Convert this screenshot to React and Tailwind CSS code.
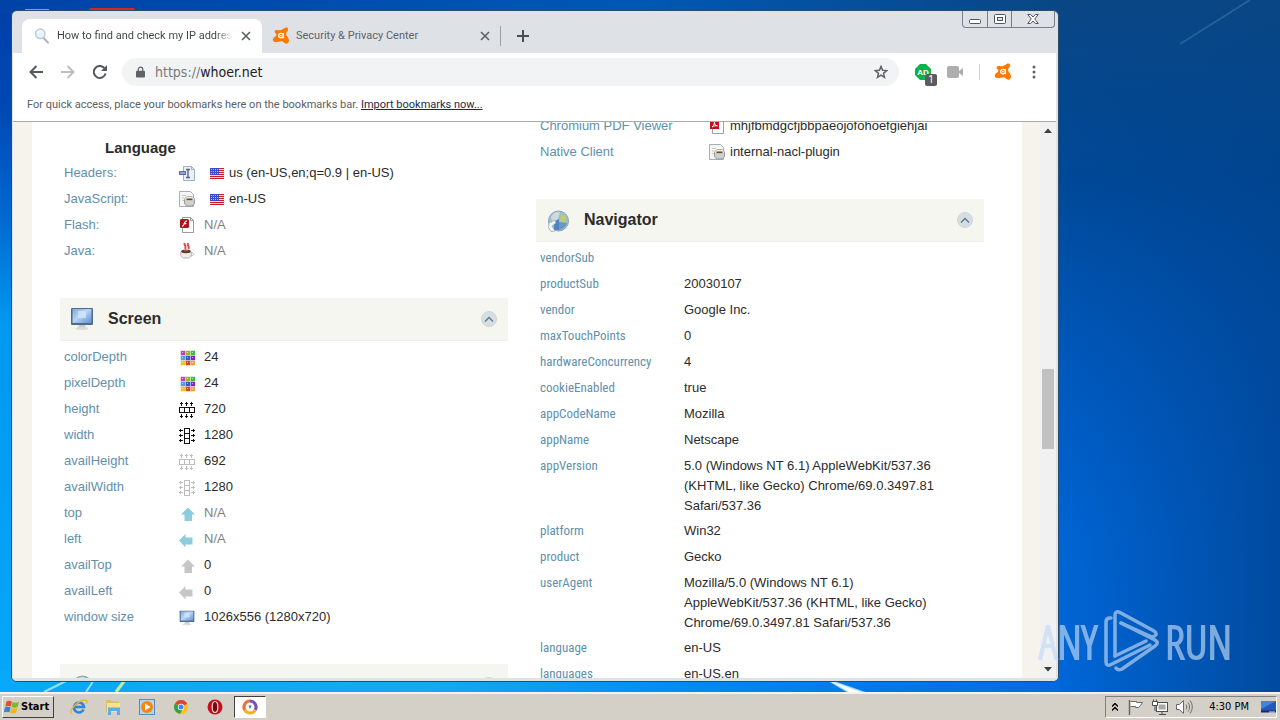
import React from "react";

const pageFont = "font-['Liberation_Sans',Arial,sans-serif]";
const uiFont = "font-['Tahoma','Roboto','Noto_Sans',sans-serif]";
const boldUiFont = "font-['Tahoma','DejaVu_Sans_Condensed','Noto_Sans',sans-serif]";
const narrowFont = "font-['Roboto_Condensed','Liberation_Sans',sans-serif]";

/* ---------- icons ---------- */

function AvastIcon({ size = 18 }) {
  return (
    <svg width={size} height={size} viewBox="0 0 18 18" aria-hidden="true">
      <path
        d="M2.600 4.400C2.800 3 4.600 2.600 6.400 3.200C8.200 3.600 9.600 3 11 2C12.600 .8 14.200 0 15.400 .8C16.800 1.800 16.200 3.600 15 4.800C14 5.800 13.800 6.800 14.400 8.200C15.200 9.800 17 11.200 17 13.400C17 15.600 15.400 17.200 13.600 16.600C12 16 11.400 14.400 9.400 14.200C7.200 14.200 4.800 15.600 2.600 15C.6 14.400 .2 12.200 1.600 10.800C3 9.600 4.400 9.200 4.400 7.600C4.400 6.200 2.400 6 2.600 4.400Z"
        fill="#ff7800"
      />
      <circle cx="9" cy="8.600" r="2.300" fill="none" stroke="#fff" strokeWidth="1.300" />
      <path d="M11.400 6v5.200M8 8.600h1.600" stroke="#fff" strokeWidth="1.300" />
    </svg>
  );
}

function CloseIcon() {
  return (
    <svg width="10" height="10" viewBox="0 0 10 10" aria-hidden="true">
      <path d="M1 1l8 8M9 1l-8 8" stroke="#5f6368" strokeWidth="1.700" />
    </svg>
  );
}

function SearchFavicon() {
  return (
    <svg width="16" height="16" viewBox="0 0 16 16" aria-hidden="true">
      <path d="M9.600 10l4.400 4.600" stroke="#b4b0b8" strokeWidth="2" strokeLinecap="round" />
      <circle cx="6.300" cy="5.800" r="4.700" fill="#e9f3fb" stroke="#bccbe0" strokeWidth="1.500" />
      <path d="M4 5a2.600 2.600 0 0 1 2.600-2" stroke="#fff" strokeWidth="1.200" fill="none" />
    </svg>
  );
}

function FlagIcon() {
  return (
    <svg width="14" height="11" viewBox="0 0 14 11" shapeRendering="crispEdges" aria-hidden="true">
      <rect width="14" height="11" fill="#f6d5d8" />
      {[0, 2, 4, 6, 8, 10].map((y) => (
        <rect key={y} y={y} width="14" height="1" fill="#c81e2c" />
      ))}
      <rect width="9" height="7" fill="#4346c4" />
      {[1, 3, 5].map((y) => (
        <path key={y} d={`M1 ${y + 0.5}h8`} stroke="#b9bbee" strokeDasharray="1 1" />
      ))}
    </svg>
  );
}

function Sheet({ children }) {
  return (
    <svg width="16" height="16" viewBox="0 0 16 16" aria-hidden="true">
      {children}
    </svg>
  );
}

function HeaderIcon() {
  return (
    <Sheet>
      <path d="M4.500 1.500h8l3 3v11h-11z" fill="#e9eff4" stroke="#a3b0bc" />
      <path d="M12.500 1.500v3h3" fill="none" stroke="#a3b0bc" />
      <rect x="0" y="6" width="7" height="4" fill="#5b6cae" />
      <path d="M1 8h5" stroke="#cdd8f4" />
      <path d="M7 4.500h4M9 4.500v8M7 12.500h4" stroke="#54648c" strokeWidth="1.400" />
    </Sheet>
  );
}

function ScriptIcon() {
  return (
    <Sheet>
      <path d="M.5.500h11l3 3v12H.5z" fill="#f4f5f4" stroke="#a9afac" />
      <path d="M3 4.500h4M3 7h2M3 9.500h2" stroke="#c3cbc8" />
      <path d="M5.500 8.500a5 3 0 0 1 10 0v3.600a5 3 0 0 1-10 0z" fill="#ccd1cf" stroke="#979d9b" />
      <ellipse cx="10.500" cy="7.800" rx="4.300" ry="2" fill="#efebe0" />
      <path d="M7.500 8.400h6" stroke="#6b4a34" strokeWidth="1.600" />
    </Sheet>
  );
}

function FlashIcon() {
  return (
    <Sheet>
      <path d="M3.500.500h8l3 3v12h-11z" fill="#fff" stroke="#9a9a9a" />
      <path d="M11.500.500v3h3" fill="none" stroke="#9a9a9a" />
      <rect x="1" y="2" width="9" height="9" rx="1.500" fill="#b5101c" />
      <path d="M8 3.800c-2 0-2.200 1.400-2.800 2.900S4.300 9.300 3 9.300M4.600 6.700h2.700" stroke="#fff" strokeWidth="1.200" fill="none" />
    </Sheet>
  );
}

function PdfIcon() {
  return (
    <Sheet>
      <path d="M3.500.500h8l3 3v12h-11z" fill="#fff" stroke="#a0a0a0" />
      <path d="M11.500.500v3h3" fill="none" stroke="#a0a0a0" />
      <rect x="1" y="2" width="9" height="9" fill="#c1121c" />
      <path d="M3 9c2-1.600 2.800-4 2.400-5.400C5.200 6 6.400 7.600 8.400 7.800 6.400 7.500 4.600 7.900 3 9z" stroke="#fff" fill="none" />
    </Sheet>
  );
}

function JavaIcon() {
  return (
    <Sheet>
      <path d="M6 0c-2 2 2 2.600 0 6M9.500 0c-2.500 2.200 1.500 3 0 6" stroke="#e0454c" strokeWidth="1.900" fill="none" />
      <path d="M1.500 9h11c0 3.500-1 6-3.500 6H5C2.500 15 1.500 12.500 1.500 9z" fill="#ececea" stroke="#b4b4b0" />
      <path d="M12.500 10c3-.5 3 2.800-.6 3" fill="none" stroke="#b4b4b0" />
      <ellipse cx="7" cy="8.300" rx="4.800" ry="1.900" fill="#5a3a2a" />
      <path d="M5 7.800h4" stroke="#d8584e" />
    </Sheet>
  );
}

const palette = ["#c73fc0", "#9ab81c", "#35c13f", "#4b9fe8", "#3656dc", "#8a1ed0", "#f4c21c", "#d04a1e", "#f4a03c"];

function PaletteIcon() {
  return (
    <Sheet>
      {palette.map((fill, i) => (
        <g key={fill}>
          <rect x={2 + (i % 3) * 5} y={1 + Math.floor(i / 3) * 5} width="4" height="4" fill={fill} />
          <rect x={2 + (i % 3) * 5} y={1 + Math.floor(i / 3) * 5} width="4" height="4" fill="none" stroke={fill} strokeOpacity=".5" />
          <rect x={3 + (i % 3) * 5} y={2 + Math.floor(i / 3) * 5} width="1" height="1" fill="#fff" fillOpacity=".6" />
        </g>
      ))}
    </Sheet>
  );
}

function RulerIcon({ color, vertical }) {
  return (
    <svg width="16" height="16" viewBox="0 0 16 16" shapeRendering="crispEdges" aria-hidden="true">
      <g transform={vertical ? "rotate(90 8 8)" : undefined} fill="none" stroke={color}>
        <path d="M0 5.500h16M0 10.500h16M.5 5v6M5.500 5v6M10.500 5v6M15.500 5v6" />
        {[3, 8, 13].map((x) => (
          <path key={x} d={`M${x - 0.5} 0v4M${x - 2} 1.500h3M${x - 0.5} 12v4M${x - 2} 14.500h3`} />
        ))}
      </g>
    </svg>
  );
}

function ArrowIcon({ fill, left }) {
  return (
    <Sheet>
      <path
        d={left ? "M0 8.500L6.500 2v3.500h7v7h-7v3z" : "M9 1.500l7 7h-3v6.500H5.500V8.500H2z"}
        fill={fill}
      />
    </Sheet>
  );
}

function MonitorIcon({ size = 16 }) {
  return (
    <svg width={size} height={size} viewBox="0 0 24 24" aria-hidden="true">
      <defs>
        <linearGradient id="monitorGlass" x1="0" y1="0" x2="1" y2="1">
          <stop offset="0" stopColor="#7fabdf" />
          <stop offset=".45" stopColor="#b8d5f3" />
          <stop offset="1" stopColor="#5b93d4" />
        </linearGradient>
      </defs>
      <path d="M9 18h6l1 3H8z" fill="#c4c9ce" />
      <ellipse cx="12" cy="21.500" rx="6.500" ry="1.600" fill="#dadddf" />
      <rect x="1" y="1" width="22" height="17" rx="1" fill="#53688a" />
      <rect x="2.500" y="2" width="19" height="14" fill="url(#monitorGlass)" />
      <rect x="8" y="4" width="8" height="7" fill="#e3effa" fillOpacity=".6" />
    </svg>
  );
}

function GlobeIcon() {
  return (
    <svg width="24" height="24" viewBox="0 0 24 24" aria-hidden="true">
      <circle cx="12.500" cy="13" r="10" fill="#a3bccd" stroke="#90a3b2" />
      <path d="M5 9a9 9 0 0 1 9-5l-2 7-6 3z" fill="#cfdcdc" />
      <path d="M15 6c3 .5 5 2.500 5.500 6L18 16l-4-4z" fill="#bccf70" />
      <path d="M13 14l8 1c-1 4-5 7-8 7z" fill="#6a98c6" />
      <path d="M8 22V14l5-3v11z" fill="#4e85c0" />
      <path d="M3 15l6-3 1 3-4 3 3 5-4 .5-2.500-4z" fill="#f4f6f6" stroke="#9aa7ae" strokeWidth=".8" />
    </svg>
  );
}

function WindowsLogo() {
  return (
    <svg width="16" height="16" viewBox="0 0 16 16" aria-hidden="true">
      <path d="M2.500 2.600C4.500 1.400 6.300 1.700 8 2.600L6.800 7.600C5.200 6.800 3.300 6.600 1.200 7.700z" fill="#e5502a" />
      <path d="M8.700 3c2 1 4 1 6.300-.2l-1.300 5C11.500 9 9.300 8.800 7.500 7.900z" fill="#7db928" />
      <path d="M1 8.500c2-1.100 4-.8 5.600 0L5.400 13.300C3.700 12.500 2 12.400-.1 13.400z" fill="#2f86d6" />
      <path d="M7.300 8.900c2 .9 4 1 6.200-.2l-1.300 4.900c-2.200 1.200-4.300 1-6.100.2z" fill="#f7b51c" />
    </svg>
  );
}

function AnyRunMark() {
  return (
    <svg width="56" height="62" viewBox="0 0 56 62" fill="none" stroke="currentColor" strokeWidth="3.500" strokeLinejoin="round" strokeLinecap="round" aria-hidden="true">
      <path d="M8 8H7C4.500 8 3 9.500 3 12v40c0 3 2 4 5 2.500L47 35" />
      <path d="M12 46V5c0-3 2-4 5-2.500L51 21c2.500 1.500 3 4 .5 5L49 27 18 13" />
      <path d="M18 13l34 17c3 2 3 4 0 6L19 59c-3 1.500-5 .5-6-1M12 46l31-15" />
    </svg>
  );
}

/* ---------- data ---------- */

const grey = "#bdbdbd";

const languageRows = [
  { label: "Headers:", icon: <HeaderIcon />, flag: true, value: "us (en-US,en;q=0.9 | en-US)" },
  { label: "JavaScript:", icon: <ScriptIcon />, flag: true, value: "en-US" },
  { label: "Flash:", icon: <FlashIcon />, value: "N/A" },
  { label: "Java:", icon: <JavaIcon />, value: "N/A" },
];

const screenRows = [
  { label: "colorDepth", icon: <PaletteIcon />, value: "24" },
  { label: "pixelDepth", icon: <PaletteIcon />, value: "24" },
  { label: "height", icon: <RulerIcon color="#111" />, value: "720" },
  { label: "width", icon: <RulerIcon color="#111" vertical />, value: "1280" },
  { label: "availHeight", icon: <RulerIcon color={grey} />, value: "692" },
  { label: "availWidth", icon: <RulerIcon color={grey} vertical />, value: "1280" },
  { label: "top", icon: <ArrowIcon fill="#8ecbdb" />, value: "N/A" },
  { label: "left", icon: <ArrowIcon fill="#8ecbdb" left />, value: "N/A" },
  { label: "availTop", icon: <ArrowIcon fill="#c6c6c6" />, value: "0" },
  { label: "availLeft", icon: <ArrowIcon fill="#c6c6c6" left />, value: "0" },
  { label: "window size", icon: <MonitorIcon />, value: "1026x556 (1280x720)" },
];

const pluginRows = [
  { label: "Chromium PDF Viewer", icon: <PdfIcon />, value: "mhjfbmdgcfjbbpaeojofohoefgiehjai" },
  { label: "Native Client", icon: <ScriptIcon />, value: "internal-nacl-plugin" },
];

const navigatorRows = [
  ["vendorSub", ""],
  ["productSub", "20030107"],
  ["vendor", "Google Inc."],
  ["maxTouchPoints", "0"],
  ["hardwareConcurrency", "4"],
  ["cookieEnabled", "true"],
  ["appCodeName", "Mozilla"],
  ["appName", "Netscape"],
  ["appVersion", "5.0 (Windows NT 6.1) AppleWebKit/537.36 (KHTML, like Gecko) Chrome/69.0.3497.81 Safari/537.36"],
  ["platform", "Win32"],
  ["product", "Gecko"],
  ["userAgent", "Mozilla/5.0 (Windows NT 6.1) AppleWebKit/537.36 (KHTML, like Gecko) Chrome/69.0.3497.81 Safari/537.36"],
  ["language", "en-US"],
  ["languages", "en-US,en"],
];

/* ---------- page parts ---------- */

function IconTable({ rows, labelWidth, iconWidth, iconCell = "pt-[5px] pl-[3px]" }) {
  return (
    <table className="w-full table-fixed text-left text-[13px] leading-5">
      <colgroup>
        <col className={labelWidth} />
        <col className={iconWidth} />
        <col />
      </colgroup>
      <tbody>
        {rows.map((row) => (
          <tr key={row.label} className="h-[26px] align-top">
            <th scope="row" className="pt-[3px] pb-[2px] pl-1 font-normal text-[#6290ab]">{row.label}</th>
            <td className={iconCell}>{row.icon}</td>
            <td className={row.value === "N/A" ? "pt-[3px] text-[#808080]" : "pt-[3px] text-[#2b2b2b]"}>
              <span className={row.flag ? "flex items-center gap-[5px] pl-[6px]" : ""}>
                {row.flag && <FlagIcon />}
                {row.value}
              </span>
            </td>
          </tr>
        ))}
      </tbody>
    </table>
  );
}

function SectionHeader({ icon, title }) {
  return (
    <header className="flex h-[43px] items-center border-b border-[#efeee6] bg-[#f6f6f0] pr-[11px] pl-[10px]">
      {icon}
      <h2 className="flex-1 pl-[14px] text-base font-bold text-[#2b2b2b]">{title}</h2>
      <button type="button" aria-label="Collapse section" className="flex size-4 items-center justify-center rounded-full border border-[#cdd7dc] bg-[#d5dfe3]">
        <svg width="10" height="7" viewBox="0 0 10 7" aria-hidden="true">
          <path d="M1 5.500l4-4 4 4" fill="none" stroke="#5c7684" strokeWidth="1.300" />
        </svg>
      </button>
    </header>
  );
}

function WhoerPage() {
  return (
    <main className={`flex min-w-0 flex-1 justify-center overflow-hidden bg-[#f6f3ec] pr-[18px] pl-[19px] ${pageFont}`}>
      <div className="grid flex-1 grid-cols-2 items-start gap-7 bg-white pr-[38px] pl-7">
        <div className="flex flex-col gap-[34px]">
          <section>
            <h3 className="pt-[14px] pl-[45px] text-[15px] leading-6 font-bold text-[#2b2b2b]">Language</h3>
            <IconTable rows={languageRows} labelWidth="w-[116px]" iconWidth="w-7" />
          </section>
          <section>
            <SectionHeader icon={<MonitorIcon size={24} />} title="Screen" />
            <div className="pt-[3px]">
              <IconTable rows={screenRows} labelWidth="w-[116px]" iconWidth="w-7" iconCell="pt-[6px] pl-[3px]" />
            </div>
          </section>
          <section>
            <SectionHeader icon={<GlobeIcon />} />
          </section>
        </div>
        <div className="-mt-[9px] flex flex-col gap-[34px]">
          <section>
            <IconTable rows={pluginRows} labelWidth="w-[170px]" iconWidth="w-6" />
          </section>
          <section>
            <SectionHeader icon={<GlobeIcon />} title="Navigator" />
            <div className="pt-[3px]">
              <table className="w-full table-fixed text-left text-[13px] leading-5">
                <colgroup>
                  <col className="w-[148px]" />
                  <col />
                </colgroup>
                <tbody>
                  {navigatorRows.map(([label, value]) => (
                    <tr key={label} className="h-[26px] align-top">
                      <th scope="row" className={`pt-[3px] pb-[2px] pl-1 font-normal text-[#6290ab] ${narrowFont}`}>{label}</th>
                      <td className="pt-[3px] pr-8 pb-[2px] text-[#2b2b2b]">{value}</td>
                    </tr>
                  ))}
                </tbody>
              </table>
            </div>
          </section>
        </div>
      </div>
    </main>
  );
}

function ScrollBar() {
  return (
    <div className="flex w-4 flex-col items-center justify-between bg-[#f1f1f1] pt-1.5 pb-1.5">
      <svg width="8" height="5" viewBox="0 0 8 5" aria-hidden="true"><path d="M0 5l4-4.500L8 5z" fill="#404040" /></svg>
      <div className="flex w-full flex-1 flex-col px-[2px]">
        <div className="flex-[236]" />
        <div className="h-20 bg-[#c1c1c1]" />
        <div className="flex-[218]" />
      </div>
      <svg width="8" height="5" viewBox="0 0 8 5" aria-hidden="true"><path d="M0 0l4 4.500L8 0z" fill="#404040" /></svg>
    </div>
  );
}

/* ---------- browser chrome ---------- */

function TabStrip() {
  return (
    <div className="flex h-[42px] items-end pl-[10px]">
      <div className="flex h-[34px] w-60 items-center rounded-t-lg bg-white pr-[11px] pl-3">
        <SearchFavicon />
        <span className="ml-[7px] flex-1 overflow-hidden bg-linear-to-r from-[#3c4043] from-90% to-transparent bg-clip-text whitespace-nowrap text-transparent">
          How to find and check my IP address
        </span>
        <button type="button" aria-label="Close tab" className="ml-2"><CloseIcon /></button>
      </div>
      <div className="flex h-[34px] w-[238px] items-center pr-[10px] pl-[10px]">
        <AvastIcon />
        <span className="ml-[6px] flex-1 text-[#5f6368]">Security &amp; Privacy Center</span>
        <button type="button" aria-label="Close tab"><CloseIcon /></button>
      </div>
      <div className="flex h-[34px] items-center">
        <span className="h-5 w-px bg-[#9a9ea5]" />
        <button type="button" aria-label="New tab" className="ml-4">
          <svg width="12" height="12" viewBox="0 0 12 12" aria-hidden="true"><path d="M6 0v12M0 6h12" stroke="#4a4d52" strokeWidth="2" /></svg>
        </button>
      </div>
      <div className="mr-[3px] ml-auto flex h-[17px] self-start rounded-b-sm border border-t-0 border-[#77808c] text-[#4f5660]">
        <button type="button" aria-label="Minimize" className="flex w-6 items-center justify-center pt-1">
          <svg width="12" height="5" viewBox="0 0 12 5" aria-hidden="true"><rect x=".5" y=".5" width="11" height="4" rx="1" fill="#fff" stroke="currentColor" /></svg>
        </button>
        <button type="button" aria-label="Maximize" className="flex w-[25px] items-center justify-center border-x border-[#77808c]">
          <svg width="12" height="10" viewBox="0 0 12 10" aria-hidden="true">
            <rect x=".5" y=".5" width="11" height="9" rx="1" fill="#fff" stroke="currentColor" />
            <rect x="3.500" y="3.500" width="5" height="3" fill="#dee1e6" stroke="currentColor" />
          </svg>
        </button>
        <button type="button" aria-label="Close" className="flex w-[42px] items-center justify-center">
          <svg width="12" height="10" viewBox="0 0 12 10" aria-hidden="true">
            <path d="M.7.500h3L6 3 8.300.500h3L7.700 5l3.600 4.500h-3L6 7 3.700 9.500h-3L4.300 5z" fill="#fff" stroke="currentColor" />
          </svg>
        </button>
      </div>
    </div>
  );
}

function Toolbar() {
  return (
    <div className="flex h-[37px] items-center bg-white pr-[10px] pl-4">
      <div className="flex items-center gap-[18px]">
        <button type="button" aria-label="Back">
          <svg width="14" height="14" viewBox="0 0 14 14" aria-hidden="true"><path d="M14 7H2M7.500 1L1.500 7l6 6" fill="none" stroke="#55585d" strokeWidth="2" /></svg>
        </button>
        <button type="button" aria-label="Forward" disabled>
          <svg width="14" height="14" viewBox="0 0 14 14" aria-hidden="true"><path d="M0 7h12M6.500 1l6 6-6 6" fill="none" stroke="#bcbec1" strokeWidth="2" /></svg>
        </button>
        <button type="button" aria-label="Reload">
          <svg width="14" height="14" viewBox="0 0 14 14" aria-hidden="true">
            <path d="M12.600 8.500A6 6 0 1 1 11.300 3" fill="none" stroke="#55585d" strokeWidth="2" />
            <path d="M14 0v6H8z" fill="#55585d" />
          </svg>
        </button>
      </div>
      <div className="ml-[15px] flex h-7 flex-1 items-center rounded-full bg-[#f1f3f4] pr-[11px] pl-[14px]">
        <svg width="9" height="12" viewBox="0 0 10 12" aria-hidden="true">
          <rect x="0" y="4.500" width="10" height="7.500" rx="1" fill="#5f6368" />
          <path d="M2.500 5V3.200a2.500 2.500 0 0 1 5 0V5" fill="none" stroke="#5f6368" strokeWidth="1.400" />
        </svg>
        <span className={`ml-[10px] flex-1 text-sm text-[#77797d] ${boldUiFont}`}>https://<span className="text-[#202124]">whoer.net</span></span>
        <button type="button" aria-label="Bookmark this page">
          <svg width="14" height="14" viewBox="0 0 16 16" aria-hidden="true">
            <path d="M8 1.600l1.800 4.400 4.700.4-3.600 3.100 1.100 4.600L8 11.600l-4 2.500 1.100-4.600L1.500 6.400l4.700-.4z" fill="none" stroke="#5f6368" strokeWidth="1.700" />
          </svg>
        </button>
      </div>
      <button type="button" aria-label="Ad blocker" className="relative ml-4">
        <svg width="16" height="16" viewBox="0 0 16 16" aria-hidden="true">
          <path d="M5 0h6l5 5v6l-5 5H5l-5-5V5z" fill="#10b04c" />
          <text x="8" y="11" textAnchor="middle" fontSize="8" fontWeight="bold" fill="#fff" fontFamily="Liberation Sans, sans-serif">AD</text>
        </svg>
        <span className="absolute -right-[6px] -bottom-[6px] flex size-3 items-center justify-center rounded-xs bg-[#5c5c5c] text-[10px] text-white">1</span>
      </button>
      <button type="button" aria-label="Video" className="ml-4">
        <svg width="16" height="12" viewBox="0 0 16 12" aria-hidden="true">
          <rect x="0" y="0" width="12" height="12" rx="2" fill="#aeaeae" />
          <path d="M12 5l4-3v8l-4-3z" fill="#aeaeae" />
        </svg>
      </button>
      <span className="ml-4 h-4 w-px bg-[#d0d3d6]" />
      <button type="button" aria-label="Avast" className="ml-[14px]"><AvastIcon /></button>
      <button type="button" aria-label="Menu" className="ml-[10px] flex w-6 justify-center">
        <svg width="4" height="14" viewBox="0 0 4 14" aria-hidden="true">
          {[2, 7, 12].map((y) => <circle key={y} cx="2" cy={y} r="1.500" fill="#5f6368" />)}
        </svg>
      </button>
    </div>
  );
}

function BrowserWindow() {
  return (
    <div className={`flex min-h-0 flex-1 flex-col overflow-hidden rounded-md border border-[#2c4c6c] bg-[#dee1e6] text-[11px] ${uiFont}`}>
      <TabStrip />
      <div className="flex min-h-0 flex-1 flex-col border-r-2 border-b-3 border-l border-[#dfe3e6]">
        <Toolbar />
        <div className="flex h-8 items-center border-b border-[#a5acaa] bg-white pl-[14px] text-[#5a5e63]">
          <span className="pb-px">
            For quick access, place your bookmarks here on the bookmarks bar.{" "}
            <a href="#import" className="text-[#1d2a44] underline">Import bookmarks now...</a>
          </span>
        </div>
        <div className="flex min-h-0 flex-1">
          <WhoerPage />
          <ScrollBar />
        </div>
      </div>
    </div>
  );
}

/* ---------- desktop ---------- */

function Taskbar() {
  const quick = "flex size-[18px] items-center justify-center";
  return (
    <footer className={`flex h-7 items-center border-t-2 border-t-[#f4f2ee] bg-[#d4d0c8] px-[2px] text-[11px] text-black ${boldUiFont}`}>
      <button type="button" className="flex h-[22px] w-[52px] items-center gap-px border border-t-white border-r-[#404040] border-b-[#404040] border-l-white pl-px font-bold">
        <WindowsLogo />
        Start
      </button>
      <nav aria-label="Quick launch" className="ml-4 flex items-center gap-4">
        <button type="button" aria-label="Internet Explorer" className={quick}>
          <svg width="18" height="16" viewBox="0 0 18 16" aria-hidden="true">
            <path d="M13.600 10.500A5 5 0 1 1 14 8H5" fill="none" stroke="#2b86dc" strokeWidth="2.600" />
            <path d="M1.500 14.500C-1 11 9-.5 16.500 1.500c1 .5.500 2-.3 3" fill="none" stroke="#e9b81e" strokeWidth="1.300" />
          </svg>
        </button>
        <button type="button" aria-label="Explorer" className={quick}>
          <svg width="16" height="16" viewBox="0 0 16 16" aria-hidden="true">
            <path d="M1 1h5l1 1.500h7V13H1z" fill="#dcbf62" />
            <path d="M2 4h13v9H2z" fill="#f5e293" />
            <path d="M3 8.500h12V16h-3v-4H6v4H3z" fill="#62ade0" />
          </svg>
        </button>
        <button type="button" aria-label="Media Player" className={quick}>
          <svg width="16" height="16" viewBox="0 0 16 16" aria-hidden="true">
            <rect x=".5" y=".5" width="15" height="15" fill="#b4d5f2" stroke="#4d8fcb" />
            <circle cx="8" cy="8" r="6" fill="#f58614" />
            <path d="M6 4.500v7L11.500 8z" fill="#fff" />
          </svg>
        </button>
        <button type="button" aria-label="Chrome" className={quick}>
          <svg width="14" height="14" viewBox="0 0 14 14" aria-hidden="true">
            <circle cx="7" cy="7" r="7" fill="#fbc116" />
            <path d="M7 7L1 3.400A7 7 0 0 1 13.200 3.800z" fill="#dd4435" />
            <path d="M7 7L1 3.400A7 7 0 0 0 6 13.900L9 8z" fill="#2da24d" />
            <circle cx="7" cy="7" r="3.200" fill="#fff" />
            <circle cx="7" cy="7" r="2.500" fill="#4285f4" />
          </svg>
        </button>
        <button type="button" aria-label="Opera" className={quick}>
          <svg width="16" height="16" viewBox="0 0 16 16" aria-hidden="true">
            <circle cx="8" cy="8" r="7.500" fill="#c0121b" />
            <ellipse cx="8" cy="8" rx="2.800" ry="5.500" fill="#7a0710" stroke="#f3dada" strokeWidth="1.200" />
          </svg>
        </button>
      </nav>
      <button type="button" aria-label="Avast Secure Browser" className="ml-[10px] flex h-[22px] w-8 items-center justify-center border border-t-[#404040] border-r-white border-b-white border-l-[#404040] bg-white">
        <svg width="16" height="16" viewBox="0 0 16 16" fill="none" strokeWidth="3.200" aria-hidden="true">
          <path d="M8 2a6 6 0 0 1 5.200 9" stroke="#7a4fc0" />
          <path d="M13.200 11A6 6 0 0 1 2.800 11" stroke="#f5b01c" />
          <path d="M2.800 11A6 6 0 0 1 8 2" stroke="#f0703a" />
          <path d="M6.500 6.500h3L8 10z" fill="#4064c8" />
        </svg>
      </button>
      <div className="mr-px ml-auto flex h-[22px] items-center border border-t-[#808080] border-r-white border-b-white border-l-[#808080] pl-1.5">
        <button type="button" aria-label="Show hidden icons">
          <svg width="6" height="8" viewBox="0 0 6 8" aria-hidden="true"><path d="M0 3.500l3-3 3 3M0 7.500l3-3 3 3" fill="none" stroke="#000" strokeWidth="1.400" /></svg>
        </button>
        <svg className="ml-[10px]" width="16" height="16" viewBox="0 0 16 16" aria-hidden="true">
          <path d="M2.500 2.500h6v1h6l-2 3-2 2h-3v-1h-5" fill="#fff" stroke="#6a6a6a" />
          <path d="M1.500 1v15" stroke="#6a6a6a" strokeWidth="1.500" />
        </svg>
        <svg className="ml-2" width="16" height="16" viewBox="0 0 16 16" aria-hidden="true">
          <rect x="4.500" y="3.500" width="11" height="9" fill="#fff" stroke="#4e4e4e" />
          <rect x="6.500" y="5.500" width="7" height="5" fill="#a8a8a8" />
          <path d="M7 15.500h7M10 13v2" stroke="#4e4e4e" />
          <path d="M.5 2.500h5v4h-5zM1.500.500v2M4.500.500v2M3 7v5" fill="#fff" stroke="#4e4e4e" />
        </svg>
        <svg className="ml-2" width="17" height="14" viewBox="0 0 17 14" fill="none" stroke="#6a6a6a" aria-hidden="true">
          <path d="M.5 4.500h3l4-4v13l-4-4h-3z" fill="#fff" />
          <path d="M10 4.500c1 1.500 1 3.500 0 5M12 2.500c2 2.500 2 6.500 0 9M14 .500c3 4 3 9 0 13" />
        </svg>
        <span className="ml-4 whitespace-nowrap">4:30 PM</span>
        <svg className="ml-3" width="15" height="13" viewBox="0 0 15 13" aria-hidden="true">
          <rect width="15" height="11" fill="#2558b8" />
          <path d="M0 0h15L0 8z" fill="#3f86dc" />
          <path d="M0 10.500h15" stroke="#122d6b" strokeWidth="2" />
          <path d="M8 11h6" stroke="#d7e5fa" />
        </svg>
      </div>
    </footer>
  );
}

export default function App() {
  return (
    <div className="relative flex h-screen flex-col overflow-hidden bg-[#0060cc]">
      <svg className="absolute inset-0 h-full w-full" viewBox="0 0 1280 720" preserveAspectRatio="none" aria-hidden="true">
        <defs>
          <linearGradient id="leftSky" x1="0" y1="0" x2="0" y2="1">
            <stop offset="0" stopColor="#003ea8" />
            <stop offset=".15" stopColor="#0048b4" />
            <stop offset=".3" stopColor="#0068d0" />
            <stop offset=".45" stopColor="#0098f0" />
            <stop offset="1" stopColor="#08a8fa" />
          </linearGradient>
          <linearGradient id="rightSky" x1="0" y1="0" x2="1" y2="0">
            <stop offset="0" stopColor="#006ade" />
            <stop offset="1" stopColor="#004a9e" />
          </linearGradient>
          <linearGradient id="shade" x1="0" y1="0" x2="0" y2="1">
            <stop offset="0" stopColor="#0a4684" />
            <stop offset=".25" stopColor="#00438c" stopOpacity=".85" />
            <stop offset=".75" stopColor="#004ca8" stopOpacity=".1" />
            <stop offset="1" stopColor="#004ca8" stopOpacity="0" />
          </linearGradient>
          <linearGradient id="topSky" x1="0" y1="0" x2="1" y2="0">
            <stop offset="0" stopColor="#0042a8" />
            <stop offset=".6" stopColor="#0058b4" />
            <stop offset="1" stopColor="#0a4684" />
          </linearGradient>
          <linearGradient id="bottomSky" x1="0" y1="0" x2="1" y2="0">
            <stop offset="0" stopColor="#08a8fa" />
            <stop offset=".4" stopColor="#18a8f4" />
            <stop offset=".7" stopColor="#0084f0" />
            <stop offset="1" stopColor="#006ade" />
          </linearGradient>
        </defs>
        <rect width="20" height="720" fill="url(#leftSky)" />
        <rect x="1040" width="240" height="720" fill="url(#rightSky)" />
        <rect x="1040" width="240" height="720" fill="url(#shade)" />
        <rect width="1060" height="14" fill="url(#topSky)" />
        <rect y="670" width="1060" height="30" fill="url(#bottomSky)" />
        <path d="M1180 44L1250 0" stroke="#4f86b8" strokeOpacity=".4" strokeWidth="2" />
        <path d="M44 692l24-12M86 692l8-12M828 680l40 14h-16z" stroke="#d8f3ff" strokeWidth="2" fill="#fff" strokeOpacity=".7" />
        <path d="M116 692l9-12" stroke="#c4ec9a" strokeWidth="3" />
        <rect x="89" y="8" width="46" height="4" rx="2" fill="#d9291c" />
        <rect x="25" y="9" width="24" height="3" fill="#7f9fc6" />
      </svg>
      <div className="relative flex min-h-0 flex-1 pt-[10px] pr-[221px] pb-[10px] pl-[11px]">
        <BrowserWindow />
      </div>
      <div className="relative"><Taskbar /></div>
      <div className="pointer-events-none absolute right-12 bottom-12 flex items-center gap-1.5 font-['Open_Sans_Condensed_Light','Open_Sans_Condensed',sans-serif] text-[46px] leading-none font-light text-[#c4daf6] opacity-65 [-webkit-text-stroke:2px_#c4daf6]">
        <span>ANY</span>
        <AnyRunMark />
        <span>RUN</span>
      </div>
    </div>
  );
}
